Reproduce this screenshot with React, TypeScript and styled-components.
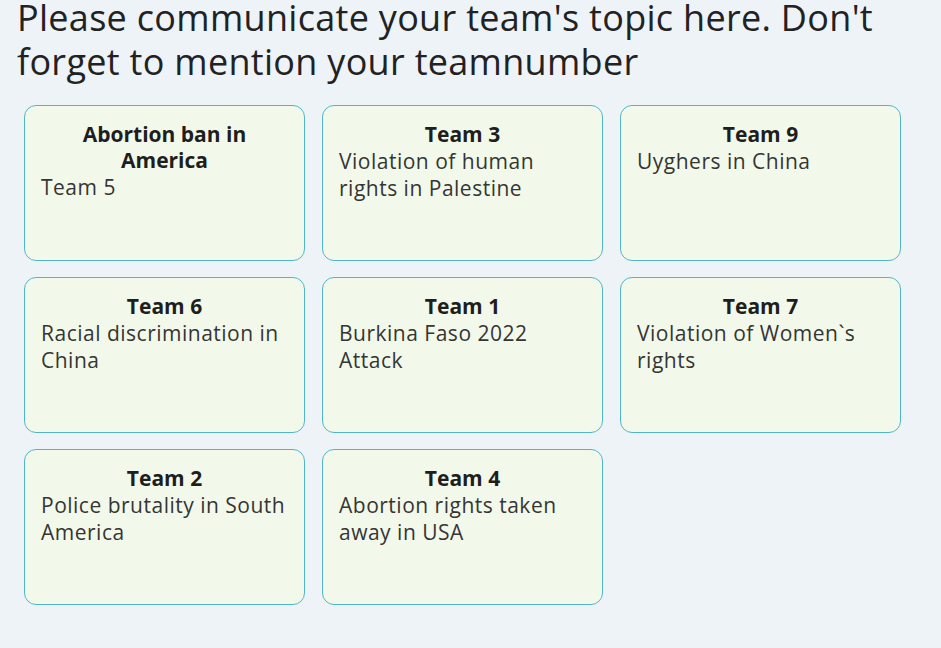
import React from 'react';
import styled, { createGlobalStyle } from 'styled-components';

const GlobalStyle = createGlobalStyle`
  html, body {
    margin: 0;
    padding: 0;
    background: #eef3f8;
  }
  body {
    font-family: "Open Sans", "Noto Sans", sans-serif;
    color: #222;
  }
`;

interface Topic {
  title: string;
  text: string;
}

const topics: Topic[] = [
  { title: 'Abortion ban in America', text: 'Team 5' },
  { title: 'Team 3', text: 'Violation of human rights in Palestine' },
  { title: 'Team 9', text: 'Uyghers in China' },
  { title: 'Team 6', text: 'Racial discrimination in China' },
  { title: 'Team 1', text: 'Burkina Faso 2022 Attack' },
  { title: 'Team 7', text: 'Violation of Women`s rights' },
  { title: 'Team 2', text: 'Police brutality in South America' },
  { title: 'Team 4', text: 'Abortion rights taken away in USA' },
];

const App: React.FC = () => {
  return (
    <Page>
      <GlobalStyle />
      <Title>Please communicate your team's topic here. Don't forget to mention your teamnumber</Title>
      <Grid>
        {topics.map((t) => (
          <Card key={t.title}>
            <CardTitle>{t.title}</CardTitle>
            <CardText>{t.text}</CardText>
          </Card>
        ))}
      </Grid>
    </Page>
  );
};

export default App;

const Page = styled.div`
  padding: 0 0 40px 0;
`;

const Title = styled.h1`
  margin: -4px 0 0 0;
  padding: 0 40px 0 17px;
  font-size: 36px;
  font-weight: 400;
  line-height: 44px;
  letter-spacing: 0.3px;
  color: #222;
`;

const Grid = styled.div`
  display: grid;
  grid-template-columns: repeat(3, 281px);
  column-gap: 17px;
  row-gap: 16px;
  padding: 21px 0 0 24px;
`;

const Card = styled.div`
  box-sizing: border-box;
  height: 156px;
  padding: 15px 16px;
  background: #f3f9ea;
  border: 1px solid #4fb7c6;
  border-radius: 12px;
`;

const CardTitle = styled.div`
  font-size: 21px;
  font-weight: 700;
  line-height: 26px;
  text-align: center;
  color: #1e1e1e;
`;

const CardText = styled.div`
  padding-top: 1px;
  font-size: 21px;
  line-height: 27px;
  letter-spacing: 0.5px;
  color: #353535;
`;
